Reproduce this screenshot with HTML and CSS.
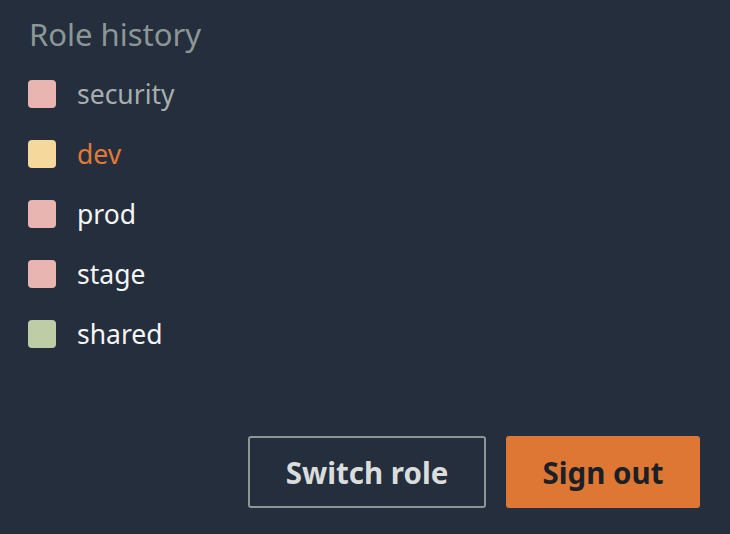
FILE: index.html
```html
<!DOCTYPE html>
<html>
<head>
<meta charset="utf-8">
<link rel="stylesheet" href="styles.css">
</head>
<body>
<div class="panel">
  <h2 class="title">Role history</h2>
  <ul class="roles">
    <li class="role muted"><span class="swatch pink"></span>security</li>
    <li class="role active"><span class="swatch yellow"></span>dev</li>
    <li class="role"><span class="swatch pink"></span>prod</li>
    <li class="role"><span class="swatch pink"></span>stage</li>
    <li class="role"><span class="swatch green"></span>shared</li>
  </ul>
  <div class="actions">
    <button class="btn secondary">Switch role</button>
    <button class="btn primary">Sign out</button>
  </div>
</div>
</body>
</html>
```

FILE: styles.css
```css
html, body {
  margin: 0;
  padding: 0;
  background: #252e3d;
  width: 730px;
  height: 534px;
  overflow: hidden;
}
.panel {
  font-family: "Noto Sans", sans-serif;
  padding: 14px 30px 0 28px;
  display: flex;
  flex-direction: column;
}
.title {
  margin: 0 0 0 1px;
  font-size: 31px;
  font-weight: 400;
  line-height: 40px;
  color: #8b9795;
}
.roles {
  list-style: none;
  margin: 26px 0 0 0;
  padding: 0;
  display: flex;
  flex-direction: column;
  gap: 32px;
}
.role {
  display: flex;
  align-items: center;
  gap: 21px;
  height: 28px;
  font-size: 26.5px;
  color: #f4f5f5;
}
.role.muted { color: #a6afad; }
.role.active { color: #e07a35; }
.swatch {
  width: 28px;
  height: 28px;
  border-radius: 4px;
  flex: none;
}
.pink { background: #e8b5b0; }
.yellow { background: #f5d89b; }
.green { background: #becda6; }
.actions {
  margin-top: 88px;
  display: flex;
  justify-content: flex-end;
  gap: 20px;
}
.btn {
  font-family: "Noto Sans", sans-serif;
  font-size: 29.5px;
  font-weight: 700;
  height: 72px;
  border-radius: 3px;
  cursor: pointer;
  padding: 0;
}
.secondary {
  width: 238px;
  background: transparent;
  border: 2px solid #8b9795;
  color: #d9dddc;
}
.primary {
  width: 194px;
  background: #de7733;
  border: none;
  color: #1b1f26;
}
```
